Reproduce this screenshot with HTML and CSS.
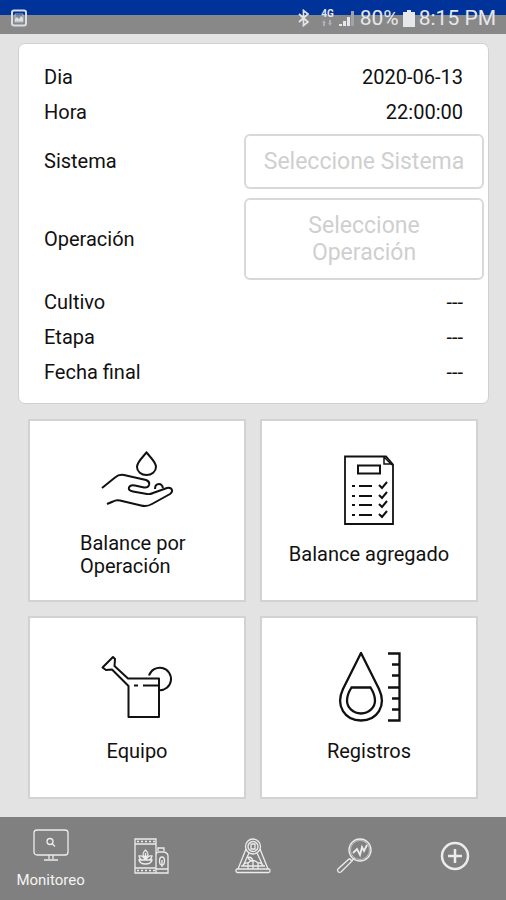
FILE: index.html
```html
<!DOCTYPE html>
<html lang="es">
<head>
<meta charset="utf-8">
<meta name="viewport" content="width=device-width, initial-scale=1">
<title>Monitoreo</title>
<link rel="stylesheet" href="styles.css">
</head>
<body>
<header class="status">
  <svg class="status-photo" width="18" height="18" viewBox="0 0 18 18" fill="none" stroke="#d9dde6" stroke-width="2"><rect x="2" y="1.500" width="14" height="15" rx="2"/><path d="M5 12.500V10l2-2 2 2 2-3 2 2v3.500z" fill="#d9dde6" stroke="none"/><path d="M5 5h8v8H5z" stroke-width=".7"/></svg>
  <div class="status-right">
    <svg class="bluetooth" width="14" height="18" viewBox="0 0 14 18" fill="none" stroke="#e3e5ea" stroke-width="1.700"><path d="M2 5l9 8-4.500 3.500v-15L11 5l-9 8"/></svg>
    <span class="network">4G<svg width="10" height="6" viewBox="0 0 10 6" fill="#adb0b6"><path d="M0 3l2-3 2 3H3v3H1V3zM6 3h1V0h2v3h1L8 6z"/></svg></span>
    <svg class="signal" width="18" height="16" viewBox="0 0 18 16"><path d="M1 14h3v2H1zM5 11h3v5H5zM9 7h3v9H9z" fill="#e6e7ea"/><path d="M13 1h3v15h-3z" fill="#a0a3a9"/></svg>
    <span>80%</span>
    <svg class="battery" width="12" height="17" viewBox="0 0 12 17" fill="#e6e7ea"><path d="M4 0h4v2h4v15H0V2h4z"/></svg>
    <span>8:15 PM</span>
  </div>
</header>
<main class="content">
  <section class="card">
    <div class="row"><span>Dia</span><span>2020-06-13</span></div>
    <div class="row"><span>Hora</span><span>22:00:00</span></div>
    <div class="row row-picker"><span id="sistema">Sistema</span><button class="picker" type="button" aria-describedby="sistema">Seleccione Sistema</button></div>
    <div class="row row-picker"><span id="operacion">Operación</span><button class="picker" type="button" aria-describedby="operacion">Seleccione Operación</button></div>
    <div class="row"><span>Cultivo</span><span>---</span></div>
    <div class="row"><span>Etapa</span><span>---</span></div>
    <div class="row"><span>Fecha final</span><span>---</span></div>
  </section>
  <div class="tiles">
    <button class="tile" type="button">
      <svg class="tile-icon" viewBox="0 0 72 72"><path d="M45.500 8.500C41 14 36 18 36 23a9.500 8 0 0 0 19 0C55 18 50 14 45.500 8.500z"/><path d="M1 44L14 33.500q4-3.500 9-2.500l22 5q4 1.500 3 5-1 3-5 2.500l-9-2q-5-1-6 2-1 3 4 4l14 2.500q3 .5 6-1L66 44q4-1 5 2 .5 2-2 4L51 60q-5 3-11 1.500l-21-5q-4-1-7 1L6 60M54 45q0-5 4-5 3 0 4 4"/></svg>
      <span>Balance por Operación</span>
    </button>
    <button class="tile" type="button">
      <svg class="tile-icon" viewBox="0 0 72 72"><path stroke-width="1.800" d="M12 1.500h41l7 8V69H12z"/><path stroke-width="1.500" d="M51 2v7h9M51 2l8 8"/><path d="M25 10.500h22v8H25z"/><path d="M26 31h13M26 41h13M26 50h13M26 60h13" stroke-width="1.800"/><path d="M19 31h3M19 41h3M19 50h3M19 60h3M46 30l3 3 5-6M46 40l3 3 5-6M46 49l3 3 5-6M46 59l3 3 5-6"/></svg>
      <span>Balance agregado</span>
    </button>
    <button class="tile" type="button">
      <svg class="tile-icon" viewBox="0 0 72 72"><path stroke-linejoin="round" d="M58 65H27.500V34L11 17.500 5 18l-3.500-2.500L12 5l2 2-.5 7L27 26.500h31zM33 33.500h4M42 33.500h16"/><path d="M48 23.500a11.300 11.300 0 1 1 10 14.800"/></svg>
      <span>Equipo</span>
    </button>
    <button class="tile" type="button">
      <svg class="tile-icon" viewBox="0 0 72 72"><path stroke-width="2.300" d="M28 1L10 37C2 54 12 68.500 28 68.500S54 54 46 37zM18.500 35.500h19q4.500 7 4.500 13a14 13 0 0 1-28 0q0-6 4.500-13zM55 1.500h11.500v67H55M59 12.500h7M59 23.500h7M55 35.500h11M59 46.500h7M59 57.500h7"/></svg>
      <span>Registros</span>
    </button>
  </div>
</main>
<nav class="tabs">
  <a class="tab" href="#monitoreo"><svg width="36" height="36" viewBox="0 0 36 36"><rect x="1" y="3" width="34" height="25" rx="3"/><path d="M16 28v4M20 28v4M11 33h14"/><circle cx="17" cy="14.500" r="3"/><path d="M19 16.500l3 3"/></svg><span>Monitoreo</span></a>
  <a class="tab" href="#insumos" aria-label="Insumos"><svg width="36" height="36" viewBox="0 0 36 36"><path d="M1 1h21v34H1zM1 6h21M1 30h21M24 13v-3h6v3M22 35V17q0-2 2-3h6q4 1 4 4v17zM22 31h12"/><path stroke-dasharray="2 2" d="M3 3.500h18M3 32.500h18"/><path d="M11.500 22v-7M9 17q0-3 2.500-5 2.500 2 2.500 5l-2.500 3zM5 18q4-1 6 4-5 1-6-4zM18 18q-4-1-6 4 5 1 6-4zM5 22h13q-1 4-6.500 4T5 22z"/><ellipse cx="28" cy="23" rx="2.500" ry="4"/><path d="M28 29v-7"/></svg></a>
  <a class="tab" href="#campo" aria-label="Campo"><svg width="36" height="36" viewBox="0 0 36 36"><circle cx="18" cy="8.500" r="7.500"/><circle cx="18" cy="8.500" r="5"/><path d="M16 6h4v5h-4zM11 11L3 31M25 11l8 20M14 15L8 28M22 15l6 13M8 28q1-4 5-3 5-5 10 0 4-1 5 3M18 31v-8M13 31v-6M23 31v-6M6 28h24M18 23q-4 0-5-4 4 0 5 4z"/><rect x="1" y="31" width="34" height="3.500" rx="1.500"/></svg></a>
  <a class="tab" href="#analisis" aria-label="Análisis"><svg width="36" height="36" viewBox="0 0 36 36"><circle cx="24" cy="12" r="11"/><circle cx="24" cy="12" r="9.500" stroke-width=".6"/><path d="M14 21l2 2L5 34q-2 1-3-.5T2 31l11-10zM16 23l2-3"/><path stroke-width="1.800" d="M17 15l4-4 3 6 2-8 2 4 3-6"/></svg></a>
  <a class="tab" href="#agregar" aria-label="Agregar"><svg width="36" height="36" viewBox="0 0 36 36"><circle cx="18" cy="18" r="13" stroke-width="2.500"/><path stroke-width="2.500" d="M11 18h14M18 11v14"/></svg></a>
</nav>
</body>
</html>
```
FILE: styles.css
```css
* { box-sizing: border-box; }

body {
  margin: 0;
  min-height: 100vh;
  display: flex;
  flex-direction: column;
  background: #e3e3e3;
  color: #111;
  font: 20px/23px Roboto, sans-serif;
}

button { font: inherit; color: inherit; }

.status {
  display: flex;
  align-items: center;
  justify-content: space-between;
  height: 34px;
  padding: 2px 10px 0;
  background: linear-gradient(#003399 15px, #888 15px);
  color: #e6e7ea;
  font-size: 21px;
}

.status-right { display: flex; align-items: center; gap: 4px; }
.bluetooth { margin-right: 6px; }

.network {
  display: flex;
  flex-direction: column;
  align-items: center;
  gap: 2px;
  font-size: 10px;
  font-weight: 700;
  line-height: 8px;
}

.content { flex: 1; padding: 9px 17px 18px 18px; }

.card {
  padding: 16px 4px 13px 25px;
  border: 1px solid #d0d0d0;
  border-radius: 7px;
  background: #fff;
}

.row {
  display: flex;
  align-items: center;
  justify-content: space-between;
  min-height: 35px;
  padding-right: 21px;
}

.row-picker { padding: 4px 0 5px; }

.picker {
  width: 240px;
  padding: 12px 16px;
  border: 2px solid #d8d8d8;
  border-radius: 6px;
  background: #fff;
  color: #cfcfcf;
  font-size: 23px;
  line-height: 27px;
}

.tiles {
  display: grid;
  grid-template-columns: 1fr 1fr;
  gap: 14px;
  padding: 15px 11px 0 10px;
}

.tile {
  display: flex;
  flex-direction: column;
  align-items: center;
  justify-content: center;
  gap: 16px;
  height: 183px;
  padding: 0 50px;
  border: 2px solid #d2d2d2;
  background: #fff;
  text-align: left;
}

.tile:nth-child(even) { padding: 0 20px; }

.tile-icon {
  width: 72px;
  height: 72px;
  flex: none;
  fill: none;
  stroke: #111;
  stroke-width: 2;
}

.tabs {
  display: grid;
  grid-template-columns: repeat(5, 1fr);
  height: 84px;
  background: #808080;
}

.tab {
  display: flex;
  flex-direction: column;
  align-items: center;
  justify-content: center;
  gap: 8px;
  padding-bottom: 7px;
  color: #f4f4f4;
  font-size: 15px;
  line-height: 18px;
  text-decoration: none;
}

.tab:first-child { padding-bottom: 2px; }

.tab svg { fill: none; stroke: #ececec; stroke-width: 1.3; }
```
